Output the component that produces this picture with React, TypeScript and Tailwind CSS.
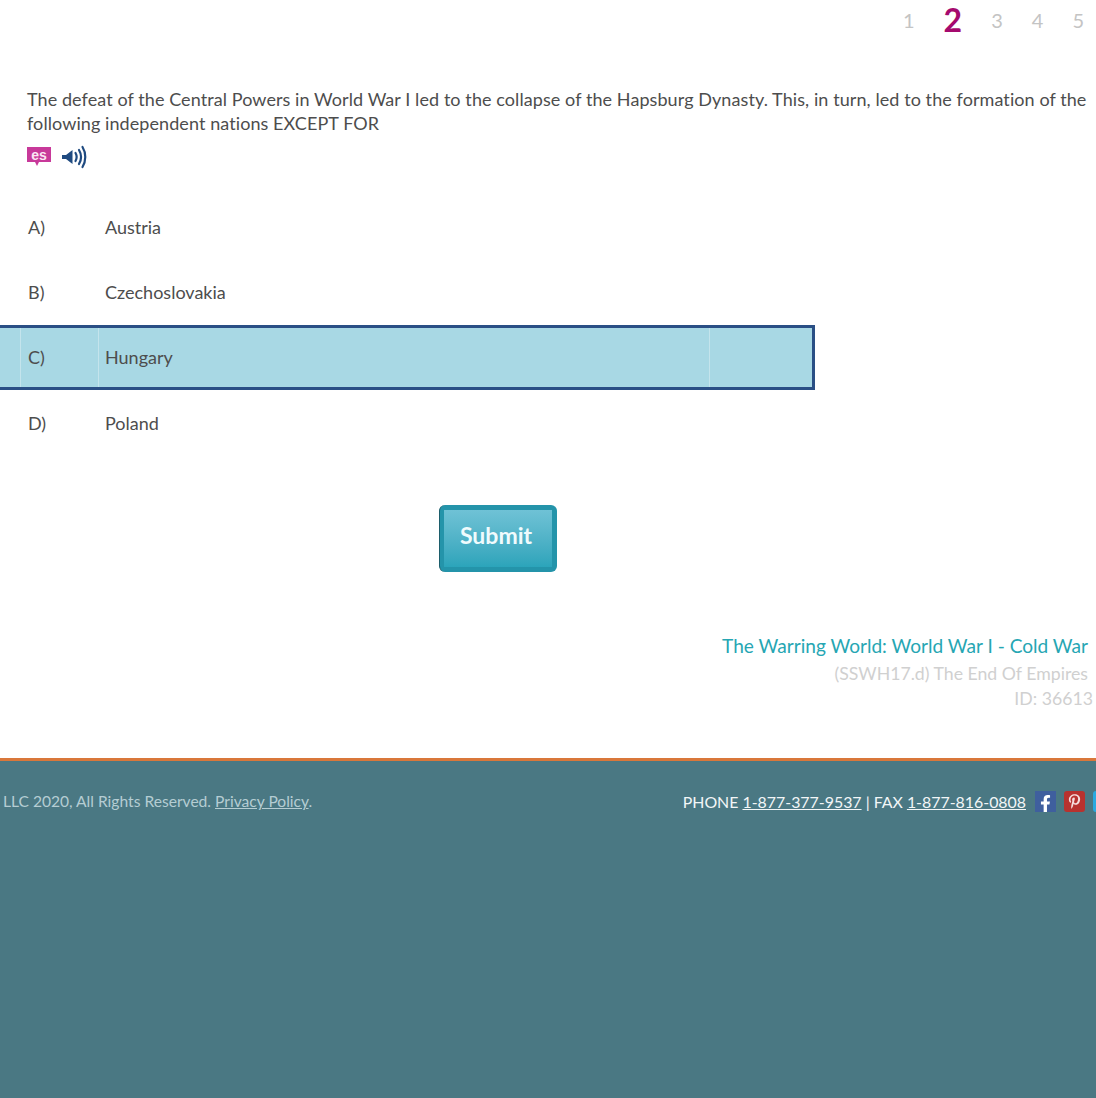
import { FaFacebookF, FaPinterestP, FaTwitter } from "react-icons/fa";

const pages = ["1", "2", "3", "4", "5"];

const answers = [
  { letter: "A)", text: "Austria" },
  { letter: "B)", text: "Czechoslovakia" },
  { letter: "C)", text: "Hungary", selected: true },
  { letter: "D)", text: "Poland", last: true },
];

function EsIcon() {
  return (
    <svg width="24" height="20" viewBox="0 0 24 20" aria-hidden>
      <path d="M0 0h24v15H12l-2 4-2-4H0z" fill="#c8399a" />
      <text x="12" y="12.5" textAnchor="middle" fontSize="14" fontWeight="700" fontFamily="Liberation Sans, sans-serif" fill="#fbe6f4">
        es
      </text>
    </svg>
  );
}

function SpeakerIcon() {
  return (
    <svg width="25" height="24" viewBox="0 0 25 24" fill="none" aria-hidden>
      <path d="M0 10h4l6.5-5v14L4 14H0z" fill="#1f4a80" />
      <path d="M13.5 8c1.5 2.6 1.5 5.4 0 8" stroke="#1f4a80" strokeWidth="2.2" strokeLinecap="round" />
      <path d="M17 5c2.6 4.4 2.6 9.6 0 14" stroke="#1f4a80" strokeWidth="2.2" strokeLinecap="round" />
      <path d="M20.5 2c3.7 6 3.7 14 0 20" stroke="#1f4a80" strokeWidth="2.2" strokeLinecap="round" />
    </svg>
  );
}

export default function App() {
  return (
    <div className="flex min-h-[1098px] w-[1096px] flex-col overflow-hidden bg-white font-['Lato',sans-serif] text-[#4d4d4d]">
      {/* Question pager */}
      <div className="flex h-[40px] items-center justify-end gap-[29px] pr-[12px] text-[20px] text-[#c4c4c4]">
        {pages.map((p) =>
          p === "2" ? (
            <span key={p} className="text-[32px] font-bold leading-none text-[#a50a6e]">
              {p}
            </span>
          ) : (
            <span key={p}>{p}</span>
          )
        )}
      </div>

      <div className="pl-[27px] pr-[8px] pt-[47px] text-[18px] leading-[24px]">
        <p className="whitespace-nowrap tracking-[0.08px]">
          The defeat of the Central Powers in World War I led to the collapse of the Hapsburg Dynasty. This, in turn, led to the formation of the
          <br />
          following independent nations EXCEPT FOR
        </p>
        <div className="mt-[10px] flex h-[24px] items-center gap-[11px]">
          <EsIcon />
          <SpeakerIcon />
        </div>
      </div>

      {/* Answers */}
      <div className="mt-[26px] w-[815px] text-[18px]">
        {answers.map((a) => (
          <div
            key={a.letter}
            className={
              a.selected
                ? "flex h-[65px] border-y-[3px] border-r-[3px] border-[#2a4f85] bg-[#a8d8e4]"
                : a.last
                  ? "flex h-[66px]"
                  : "flex h-[65px]"
            }
          >
            <div className={a.selected ? "w-[21px] border-r border-[#c4e4ec]" : "w-[21px]"} />
            <div className={a.selected ? "flex w-[78px] items-center border-r border-[#c4e4ec] pl-[7px]" : "flex w-[78px] items-center pl-[7px]"}>
              {a.letter}
            </div>
            <div className={a.selected ? "flex w-[611px] items-center border-r border-[#c4e4ec] pl-[6px]" : "flex w-[611px] items-center pl-[6px]"}>
              {a.text}
            </div>
          </div>
        ))}
      </div>

      <div className="mt-[49px] pl-[439px]">
        <button className="block h-[67px] w-[118px] rounded-[6px] border-l border-l-[#1c5d6b] bg-[#2494aa] p-[5px] pl-[4px]">
          <span className="flex h-full w-full items-center justify-center bg-gradient-to-b from-[#6fc2d6] to-[#2ba4ba] pb-[6px] pr-[4px] text-[23px] font-bold text-[#f0fbfd]">
            Submit
          </span>
        </button>
      </div>

      {/* Standard info */}
      <div className="mt-[61px] flex flex-col items-end pr-[8px] leading-[26px]">
        <div className="text-[19.1px] text-[#26a6b3]">The Warring World: World War I - Cold War</div>
        <div className="mt-[2px] text-[17.7px] text-[#d0d0d0]">(SSWH17.d) The End Of Empires</div>
        <div className="-mr-[5px] -mt-[1px] text-[17.7px] text-[#d0d0d0]">ID: 36613</div>
      </div>

      <footer className="mt-[46px] flex flex-1 items-start justify-between border-t-[3px] border-[#d9773a] bg-[#4a7883] pl-[3px] pt-[29px]">
        <div className="text-[15.6px] text-[#b5cdd3]">
          LLC 2020, All Rights Reserved. <a className="underline">Privacy Policy</a>.
        </div>
        <div className="flex items-center whitespace-nowrap text-[15.9px] text-[#f2f6f7]">
          <span>
            PHONE <a className="underline">1-877-377-9537</a> | FAX <a className="underline">1-877-816-0808</a>
          </span>
          <span className="ml-[9px] flex h-[21px] w-[21px] items-end justify-center bg-[#3f5f9e] text-white">
            <FaFacebookF size={17} />
          </span>
          <span className="ml-[8px] flex h-[21px] w-[21px] items-center justify-center rounded-[3px] bg-[#b8322f] text-[#f5dede]">
            <FaPinterestP size={15} />
          </span>
          <span className="ml-[8px] -mr-[18px] flex h-[21px] w-[21px] items-center justify-center rounded-[3px] bg-[#2aa9e0] text-white">
            <FaTwitter size={14} />
          </span>
        </div>
      </footer>
    </div>
  );
}
